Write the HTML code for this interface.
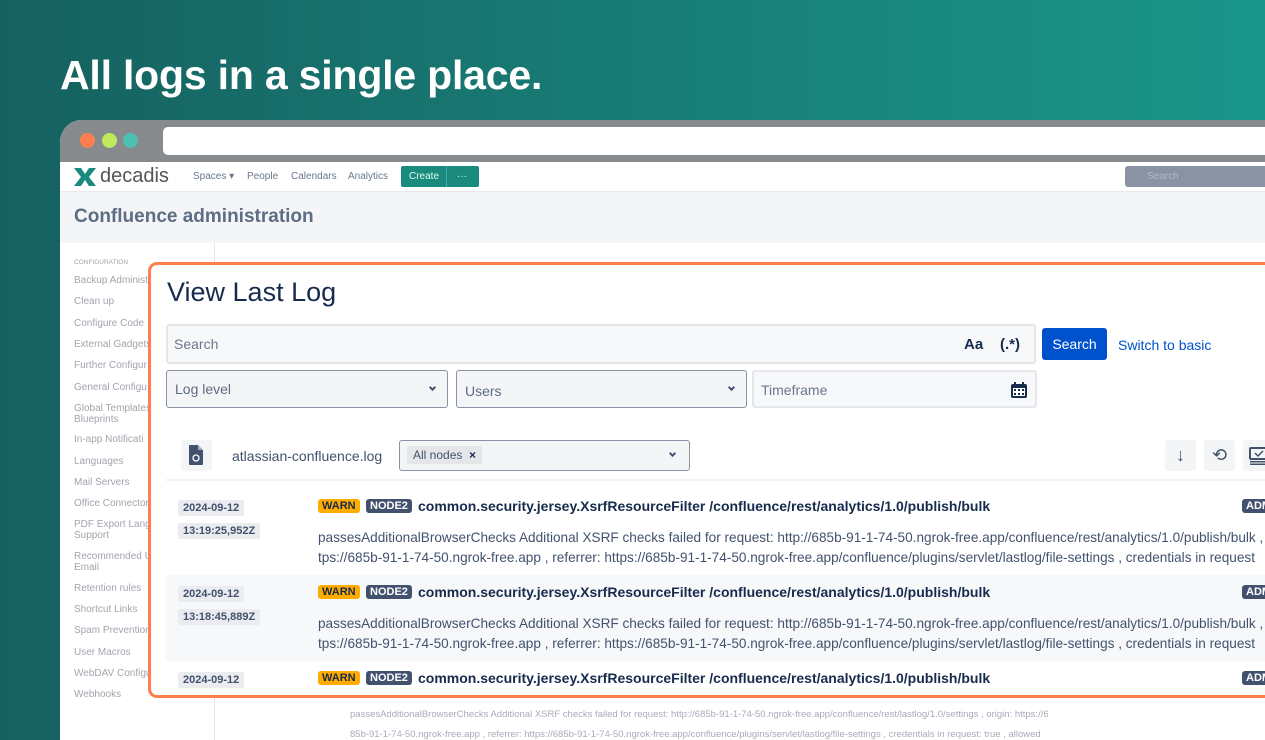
<!DOCTYPE html>
<html><head><meta charset="utf-8"><style>
*{box-sizing:border-box;margin:0;padding:0}
body{width:1265px;height:720px;overflow:hidden;position:relative;font-family:"Liberation Sans",sans-serif;background:linear-gradient(90deg,#16615f 0%,#187a74 45%,#1a968a 100%)}
.abs{position:absolute}
h1{position:absolute;left:60px;top:52px;font-size:41px;font-weight:bold;color:#fff;letter-spacing:-0.2px}
.win{left:60px;top:120px;width:1230px;height:620px;background:#fff;border-top-left-radius:22px;overflow:hidden}
.chrome{left:0;top:0;width:100%;height:42px;background:#888b8d}
.dot{width:15px;height:15px;border-radius:50%;top:13px}
.url{left:103px;top:7px;width:1200px;height:28px;background:#fff;border-radius:5px}
.nav{left:0;top:42px;width:100%;height:30px;background:#fff;border-bottom:1px solid #e8e8e8;font-size:10px;color:#6b778c}
.hdr{left:0;top:72px;width:100%;height:51px;background:#f4f5f7}
.side{left:0;top:123px;width:155px;height:500px;border-right:1px solid #e4e4e4;font-size:10px;color:#a0a5ad}
.side div{position:absolute;left:14px}
.panel{left:148px;top:262px;width:1140px;height:436px;background:#fff;border:3px solid #ff7f4c;border-radius:9px;overflow:hidden}
.inp{position:absolute;background:#f7f8fa;border:2px solid #e4e6ea;border-radius:3px;font-size:14px;color:#6b778c}
.sel{position:absolute;background:#f4f5f7;border:1px solid #8993a4;border-radius:3px;font-size:14px;color:#5e6c84}
.chev{position:absolute;right:12px;top:14px;width:5px;height:5px;border-right:2px solid #42526e;border-bottom:2px solid #42526e;transform:rotate(45deg)}
.date{position:absolute;left:27px;background:#ebecf0;color:#42526e;font-size:11px;font-weight:bold;padding:2px 5px;border-radius:2px}
.warn{position:absolute;left:167px;background:#ffab00;color:#172b4d;font-size:11px;font-weight:bold;padding:1px 4px;border-radius:3px}
.node{position:absolute;left:215px;background:#42526e;color:#fff;font-size:11px;font-weight:bold;padding:1px 4px;border-radius:3px}
.ttl{position:absolute;left:267px;font-size:14px;font-weight:bold;color:#172b4d;white-space:nowrap}
.adm{position:absolute;left:1091px;background:#42526e;color:#fff;font-size:11px;font-weight:bold;padding:1px 4px;border-radius:3px}
.msg{position:absolute;left:167px;font-size:13.6px;color:#42526e;white-space:nowrap;line-height:20px}
.ib{position:absolute;width:31px;height:31px;background:#f4f5f7;border-radius:3px}
</style></head><body>
<h1>All logs in a single place.</h1>
<div class="abs win">
 <div class="abs chrome">
  <div class="abs dot" style="left:20px;background:#ff7f50"></div>
  <div class="abs dot" style="left:42px;background:#c0ea5a"></div>
  <div class="abs dot" style="left:63px;background:#4cc1b0"></div>
  <div class="abs url"></div>
 </div>
 <div class="abs nav">
  <svg class="abs" style="left:14px;top:6px" width="22" height="18" viewBox="0 0 22 18"><path d="M0 0h7l4 6 4-6h7l-7 9 7 9h-7l-4-6-4 6H0l7-9z" fill="#1a8a7e"/></svg>
  <div class="abs" style="left:40px;top:3px;font-size:20px;color:#555">decadis</div>
  <div class="abs" style="left:133px;top:9px">Spaces ▾</div>
  <div class="abs" style="left:187px;top:9px">People</div>
  <div class="abs" style="left:231px;top:9px">Calendars</div>
  <div class="abs" style="left:288px;top:9px">Analytics</div>
  <div class="abs" style="left:341px;top:4px;width:78px;height:21px;background:#1a8a7e;border-radius:2px;color:#dfe;font-size:10px;line-height:21px"><span style="margin-left:8px">Create</span><span style="position:absolute;left:45px;top:0;width:1px;height:21px;background:#4aa"></span><span style="position:absolute;left:56px">···</span></div>
  <div class="abs" style="left:1065px;top:4px;width:200px;height:21px;background:#8993a4;border-radius:3px;color:#b0b8c6;line-height:21px;padding-left:22px">Search</div>
 </div>
 <div class="abs hdr"><div class="abs" style="left:14px;top:14px;font-size:19px;font-weight:bold;color:#5e6c84">Confluence administration</div></div>
 <div class="abs side">
  <div style="top:16px;font-size:6.5px">CONFIGURATION</div>
  <div style="top:32px">Backup Administ</div>
  <div style="top:53px">Clean up</div>
  <div style="top:75px">Configure Code</div>
  <div style="top:96px">External Gadgets</div>
  <div style="top:117px">Further Configur</div>
  <div style="top:139px">General Configu</div>
  <div style="top:160px;line-height:11px">Global Templates<br>Blueprints</div>
  <div style="top:191px">In-app Notificati</div>
  <div style="top:213px">Languages</div>
  <div style="top:234px">Mail Servers</div>
  <div style="top:255px">Office Connector</div>
  <div style="top:276px;line-height:11px">PDF Export Lang<br>Support</div>
  <div style="top:308px;line-height:11px">Recommended U<br>Email</div>
  <div style="top:340px">Retention rules</div>
  <div style="top:361px">Shortcut Links</div>
  <div style="top:382px">Spam Prevention</div>
  <div style="top:404px">User Macros</div>
  <div style="top:425px">WebDAV Configu</div>
  <div style="top:446px">Webhooks</div>
 </div>
 <div class="abs" style="left:290px;top:585px;font-size:9.5px;color:#aab;white-space:nowrap;line-height:20px">passesAdditionalBrowserChecks Additional XSRF checks failed for request: http://685b-91-1-74-50.ngrok-free.app/confluence/rest/lastlog/1.0/settings , origin: https://6<br>85b-91-1-74-50.ngrok-free.app , referrer: https://685b-91-1-74-50.ngrok-free.app/confluence/plugins/servlet/lastlog/file-settings , credentials in request: true , allowed</div>
</div>
<div class="abs panel">
 <div class="abs" style="left:16px;top:12px;font-size:27px;color:#172b4d">View Last Log</div>
 <div class="inp" style="left:15px;top:59px;width:870px;height:40px"><span style="position:absolute;left:6px;top:10px">Search</span><span style="position:absolute;left:796px;top:10px;font-weight:bold;color:#172b4d;font-size:15px">Aa</span><span style="position:absolute;left:832px;top:10px;font-weight:bold;color:#172b4d;font-size:15px">(.*)</span></div>
 <div class="abs" style="left:891px;top:63px;width:65px;height:32px;background:#0052cc;border-radius:3px;color:#fff;font-size:14px;text-align:center;line-height:32px">Search</div>
 <div class="abs" style="left:967px;top:72px;font-size:14px;color:#0052cc">Switch to basic</div>
 <div class="sel" style="left:15px;top:105px;width:282px;height:38px"><span style="position:absolute;left:8px;top:10px">Log level</span><div class="chev"></div></div>
 <div class="sel" style="left:305px;top:105px;width:291px;height:38px"><span style="position:absolute;left:8px;top:12px">Users</span><div class="chev"></div></div>
 <div class="inp" style="left:601px;top:105px;width:285px;height:38px"><span style="position:absolute;left:7px;top:10px">Timeframe</span>
  <svg style="position:absolute;left:256px;top:9px" width="18" height="18" viewBox="0 0 18 18"><rect x="1" y="3" width="16" height="14" rx="2" fill="#172b4d"/><rect x="3" y="7" width="12" height="8" fill="#fff"/><rect x="4" y="1" width="2" height="4" fill="#172b4d"/><rect x="12" y="1" width="2" height="4" fill="#172b4d"/><g fill="#172b4d"><rect x="4" y="8" width="2" height="2"/><rect x="8" y="8" width="2" height="2"/><rect x="12" y="8" width="2" height="2"/><rect x="4" y="12" width="2" height="2"/><rect x="8" y="12" width="2" height="2"/><rect x="12" y="12" width="2" height="2"/></g></svg></div>
 <div class="ib" style="left:30px;top:175px"><svg style="position:absolute;left:8px;top:5px" width="14" height="20" viewBox="0 0 14 20"><path d="M1 0h8l5 5v14a1 1 0 0 1-1 1H1a1 1 0 0 1-1-1V1a1 1 0 0 1 1-1z" fill="#42526e"/><path d="M9 0v5h5" fill="#fff" opacity=".5"/><circle cx="7" cy="13" r="3" fill="none" stroke="#fff" stroke-width="1.3"/></svg></div>
 <div class="abs" style="left:81px;top:183px;font-size:14px;color:#42526e">atlassian-confluence.log</div>
 <div class="sel" style="left:248px;top:175px;width:291px;height:31px;border-color:#8993a4"><span style="position:absolute;left:7px;top:5px;background:#e4e6ea;padding:2px 6px;font-size:12px;color:#42526e;border-radius:2px">All nodes &nbsp;<b style="color:#172b4d">×</b></span><div class="chev" style="right:14px;top:10px"></div></div>
 <div class="ib" style="left:1014px;top:175px;text-align:center;font-size:18px;color:#42526e;line-height:31px">↓</div>
 <div class="ib" style="left:1053px;top:175px;text-align:center;font-size:18px;color:#42526e;line-height:31px">⟲</div>
 <div class="ib" style="left:1092px;top:175px"><svg style="position:absolute;left:6px;top:7px" width="20" height="18" viewBox="0 0 20 18"><rect x="1" y="1" width="18" height="11" rx="1" fill="none" stroke="#42526e" stroke-width="2"/><path d="M6 6l3 3 5-5" fill="none" stroke="#42526e" stroke-width="1.5"/><rect x="1" y="14" width="18" height="1.5" fill="#42526e"/><rect x="1" y="16.5" width="18" height="1.5" fill="#42526e"/></svg></div>
 <div class="abs" style="left:15px;top:214px;width:1130px;height:2px;background:#f0f1f3"></div>
 <div class="abs" style="left:15px;top:310px;width:1130px;height:86px;background:#f7f8f9"></div>
 <div class="date" style="top:235px">2024-09-12</div><div class="date" style="top:258px">13:19:25,952Z</div>
 <div class="warn" style="top:234px">WARN</div><div class="node" style="top:234px">NODE2</div>
 <div class="ttl" style="top:233px">common.security.jersey.XsrfResourceFilter /confluence/rest/analytics/1.0/publish/bulk</div><div class="adm" style="top:234px">ADM</div>
 <div class="msg" style="top:263px">passesAdditionalBrowserChecks Additional XSRF checks failed for request: http://685b-91-1-74-50.ngrok-free.app/confluence/rest/analytics/1.0/publish/bulk , o<br>tps://685b-91-1-74-50.ngrok-free.app , referrer: https://685b-91-1-74-50.ngrok-free.app/confluence/plugins/servlet/lastlog/file-settings , credentials in request</div>
 <div class="date" style="top:321px">2024-09-12</div><div class="date" style="top:344px">13:18:45,889Z</div>
 <div class="warn" style="top:320px">WARN</div><div class="node" style="top:320px">NODE2</div>
 <div class="ttl" style="top:319px">common.security.jersey.XsrfResourceFilter /confluence/rest/analytics/1.0/publish/bulk</div><div class="adm" style="top:320px">ADM</div>
 <div class="msg" style="top:349px">passesAdditionalBrowserChecks Additional XSRF checks failed for request: http://685b-91-1-74-50.ngrok-free.app/confluence/rest/analytics/1.0/publish/bulk , o<br>tps://685b-91-1-74-50.ngrok-free.app , referrer: https://685b-91-1-74-50.ngrok-free.app/confluence/plugins/servlet/lastlog/file-settings , credentials in request</div>
 <div class="date" style="top:407px">2024-09-12</div>
 <div class="warn" style="top:406px">WARN</div><div class="node" style="top:406px">NODE2</div>
 <div class="ttl" style="top:405px">common.security.jersey.XsrfResourceFilter /confluence/rest/analytics/1.0/publish/bulk</div><div class="adm" style="top:406px">ADM</div>
</div>
</body></html>
